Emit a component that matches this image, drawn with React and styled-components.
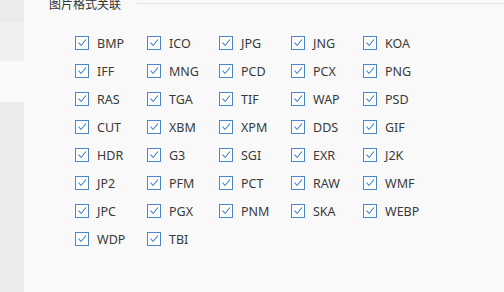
import React from 'react'
import styled, { createGlobalStyle } from 'styled-components'

const formats = [
  'BMP', 'ICO', 'JPG', 'JNG', 'KOA',
  'IFF', 'MNG', 'PCD', 'PCX', 'PNG',
  'RAS', 'TGA', 'TIF', 'WAP', 'PSD',
  'CUT', 'XBM', 'XPM', 'DDS', 'GIF',
  'HDR', 'G3', 'SGI', 'EXR', 'J2K',
  'JP2', 'PFM', 'PCT', 'RAW', 'WMF',
  'JPC', 'PGX', 'PNM', 'SKA', 'WEBP',
  'WDP', 'TBI',
]

const sideItems = [
  { h: 22, tone: 'idle' },
  { h: 39, tone: 'hover' },
  { h: 41, tone: 'active' },
]

function Check() {
  return (
    <Box>
      <svg width="12" height="12" viewBox="0 0 12 12">
        <polyline points="2.5,5.5 5,8.5 10,2.5" fill="none" stroke="#3d7fcc" strokeWidth="1.1" />
      </svg>
    </Box>
  )
}

function App() {
  return (
    <>
      <Global />
      <Page>
        <Sidebar>
          {sideItems.map((s, i) => (
            <SideItem key={i} h={s.h} tone={s.tone} />
          ))}
          <SideRest />
        </Sidebar>
        <Main>
          <Header>
            <Title>图片格式关联</Title>
            <Rule />
          </Header>
          <Grid>
            {formats.map(f => (
              <Item key={f}>
                <Check />
                <Label>{f}</Label>
              </Item>
            ))}
          </Grid>
        </Main>
      </Page>
    </>
  )
}

export default App

const Global = createGlobalStyle`
body{
  margin:0;
  background:#f9f9f9;
  font-family:"Noto Sans","Noto Sans CJK SC",sans-serif;
}
`
const Page = styled.div`
display:flex;
width:504px;
height:292px;
overflow:hidden;
background:#f9f9f9;
`
const Sidebar = styled.div`
width:24px;
flex-shrink:0;
display:flex;
flex-direction:column;
`
const SideItem = styled.div`
height:${p => p.h}px;
background:${p => (p.tone === 'active' ? '#f9f9f9' : p.tone === 'hover' ? '#f0f0f0' : '#ebebeb')};
`
const SideRest = styled.div`
flex:1;
background:#ebebeb;
`
const Main = styled.div`
flex:1;
padding-left:25px;
`
const Header = styled.div`
display:flex;
align-items:center;
margin-top:-6px;
height:18px;
`
const Title = styled.div`
font-family:"Noto Sans CJK SC",sans-serif;
font-size:12px;
color:#333;
`
const Rule = styled.div`
flex:1;
height:1px;
background:#e2e2e2;
margin-left:16px;
`
const Grid = styled.div`
display:grid;
grid-template-columns:repeat(5,72px);
grid-auto-rows:28px;
margin-top:24px;
margin-left:26px;
`
const Item = styled.div`
display:flex;
align-items:center;
gap:8px;
height:14px;
`
const Box = styled.div`
width:12px;
height:12px;
border:1px solid #4a86c8;
background:#fff;
display:flex;
`
const Label = styled.span`
font-size:12.5px;
color:#3a3a3a;
`
